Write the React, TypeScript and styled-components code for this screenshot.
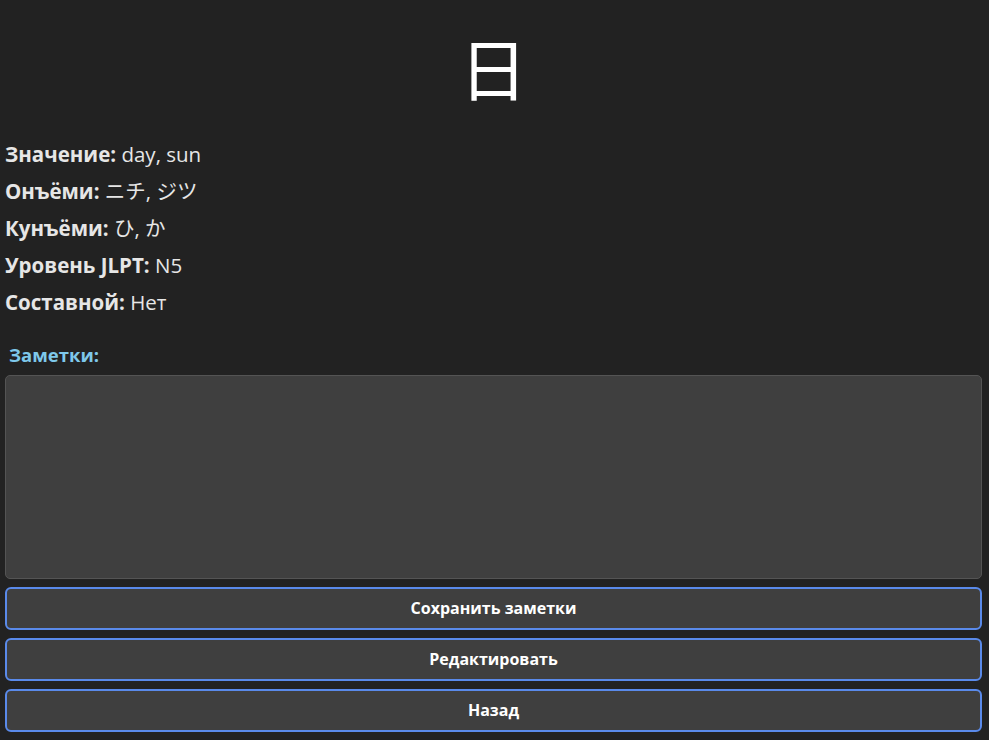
import styled, { createGlobalStyle } from 'styled-components'

const GlobalStyle = createGlobalStyle`
  body {
    margin: 0;
    background: #222222;
    color: #e6e6e6;
    font-family: "Open Sans", "Noto Sans", "Noto Sans CJK JP", sans-serif;
  }
`

const Page = styled.div`
  display: flex;
  flex-direction: column;
  padding: 0 7px 8px 5px;
`

const Kanji = styled.h1`
  margin: 26px 0 28px;
  text-align: center;
  font-family: "Noto Sans CJK JP", sans-serif;
  font-size: 68px;
  font-weight: 400;
  line-height: 1.2;
  color: #ffffff;
`

const InfoList = styled.div`
  display: flex;
  flex-direction: column;
`

const InfoRow = styled.p`
  margin: 0;
  font-size: 20.5px;
  line-height: 37px;
  color: #e6e6e6;
`

const Label = styled.strong`
  font-weight: 700;
`

const Value = styled.span`
  font-family: "Open Sans", "Noto Sans CJK JP", sans-serif;
  font-weight: 400;
`

const NotesLabel = styled.label`
  margin: 22px 0 8px 4px;
  font-size: 18.5px;
  font-weight: 700;
  line-height: 24px;
  color: #7ec8ea;
`

const NotesArea = styled.textarea`
  box-sizing: border-box;
  width: 100%;
  height: 204px;
  margin: 0;
  background: #3f3f3f;
  border: 1px solid #545454;
  border-radius: 5px;
  color: #e6e6e6;
  font-family: inherit;
  font-size: 16px;
  resize: none;
  outline: none;
`

const Actions = styled.div`
  display: flex;
  flex-direction: column;
  gap: 8px;
  margin-top: 8px;
`

const ActionButton = styled.button`
  box-sizing: border-box;
  height: 43px;
  width: 100%;
  background: #3f3f3f;
  border: 2px solid #5a8aea;
  border-radius: 6px;
  color: #ffffff;
  font-family: "Open Sans", "Noto Sans", sans-serif;
  font-size: 16px;
  font-weight: 700;
  cursor: pointer;
`

const info = [
  { label: 'Значение:', value: 'day, sun' },
  { label: 'Онъёми:', value: 'ニチ, ジツ' },
  { label: 'Кунъёми:', value: 'ひ, か' },
  { label: 'Уровень JLPT:', value: 'N5' },
  { label: 'Составной:', value: 'Нет' },
]

export default function App() {
  return (
    <>
      <GlobalStyle />
      <Page>
        <Kanji>日</Kanji>
        <InfoList>
          {info.map((row) => (
            <InfoRow key={row.label}>
              <Label>{row.label}</Label> <Value>{row.value}</Value>
            </InfoRow>
          ))}
        </InfoList>
        <NotesLabel htmlFor="notes">Заметки:</NotesLabel>
        <NotesArea id="notes" />
        <Actions>
          <ActionButton>Сохранить заметки</ActionButton>
          <ActionButton>Редактировать</ActionButton>
          <ActionButton>Назад</ActionButton>
        </Actions>
      </Page>
    </>
  )
}
